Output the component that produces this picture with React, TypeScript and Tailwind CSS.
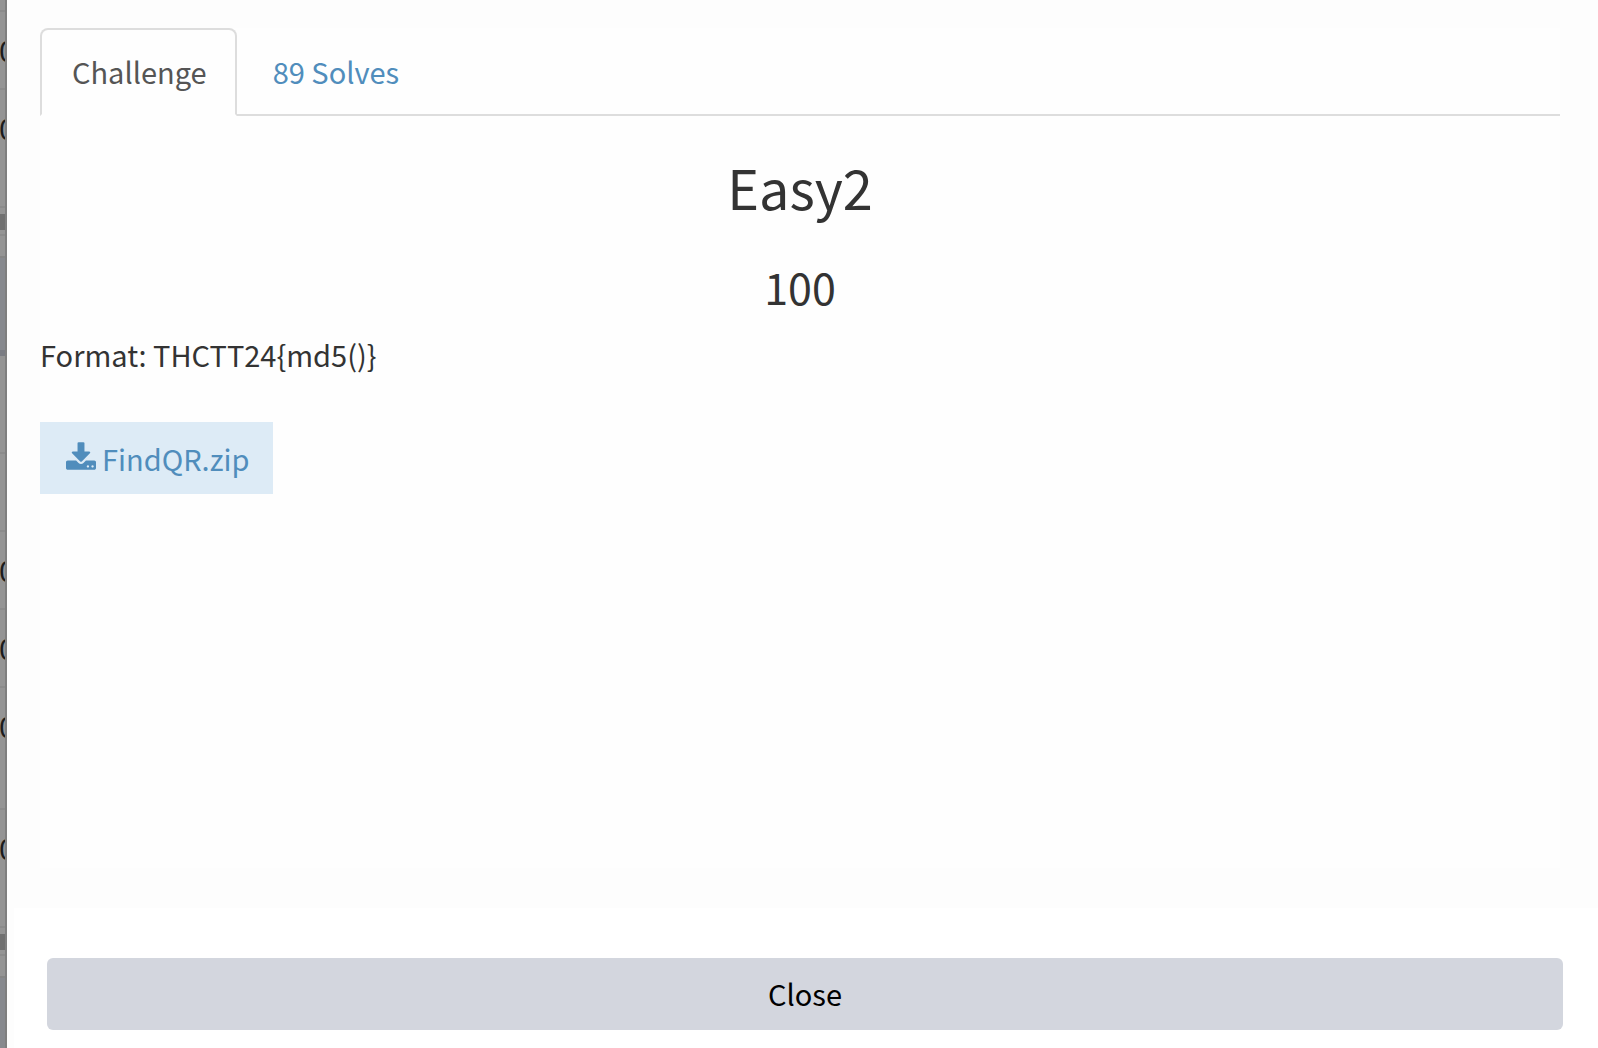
import React, { useState } from "react";

const digit = "shrink-0 pt-[17px] -ml-px text-[29px] leading-10 text-[#1c1c1c]";
const line = "shrink-0 border-b-2 border-[#8b8b8b]";

function Backdrop() {
  return (
    <div
      aria-hidden="true"
      className="flex w-[7px] shrink-0 flex-col overflow-hidden border-r-2 border-[#7f7f7f] bg-[#949494]"
    >
      <div className={"h-3 " + line} />
      <div className={"h-[76px] " + digit}>0</div>
      <div className={"h-[120px] border-y-2 border-[#8b8b8b] " + digit}>0</div>
      <div className="mt-[6px] h-4 shrink-0 bg-[#707070]" />
      <div className="mt-1 h-6 shrink-0 border-t-2 border-b-2 border-t-[#8b8b8b] border-b-[#858585]" />
      <div className="h-[92px] shrink-0 bg-[#87898e]" />
      <div className="h-[6px] shrink-0 bg-[#7a7c83]" />
      <div className={"h-[98px] " + line} />
      <div className={"h-[78px] " + line} />
      <div className={"h-[78px] " + line + " " + digit}>0</div>
      <div className={"h-[78px] " + line + " " + digit}>0</div>
      <div className={"h-[122px] " + line + " " + digit}>0</div>
      <div className={"h-[118px] " + line + " " + digit}>0</div>
      <div className="mt-[6px] h-4 shrink-0 bg-[#707070]" />
      <div className="mt-1 h-6 shrink-0 border-t-2 border-b-2 border-t-[#8b8b8b] border-b-[#858585]" />
      <div className="flex-1 bg-[#87898e]" />
    </div>
  );
}

function DownloadIcon() {
  return (
    <svg viewBox="64 0 1664 1536" className="mb-1 h-7 w-[30px]" fill="currentColor" aria-hidden="true">
      <path d="M1344 1344q0-26-19-45t-45-19-45 19-19 45 19 45 45 19 45-19 19-45zm256 0q0-26-19-45t-45-19-45 19-19 45 19 45 45 19 45-19 19-45zm128-224v320q0 40-28 68t-68 28h-1472q-40 0-68-28t-28-68v-320q0-40 28-68t68-28h465l135 136q58 56 136 56t136-56l136-136h464q40 0 68 28t28 68zm-325-569q17 41-14 70l-448 448q-18 19-45 19t-45-19l-448-448q-31-29-14-70 17-39 59-39h256v-448q0-26 19-45t45-19h256q26 0 45 19t19 45v448h256q42 0 59 39z" />
    </svg>
  );
}

const activeTab =
  "-mb-[2px] h-[88px] rounded-t-lg border-2 border-[#ddd] border-b-transparent bg-[#fefefe] pr-7 pb-[2px] pl-[30px] text-[#555]";
const idleTab =
  "-mb-[2px] h-[88px] rounded-t-lg border-2 border-transparent pr-7 pb-[2px] pl-[30px] text-[#508dbc]";

export default function App() {
  const [tab, setTab] = useState("challenge");
  return (
    <div className="flex min-h-screen font-['Noto_Sans_CJK_SC',sans-serif] text-[29px] leading-10 text-[#333]">
      <Backdrop />
      <main role="dialog" aria-labelledby="title" className="flex min-w-0 flex-1 flex-col bg-[#fdfdfd]">
        <div className="mt-7 mr-[38px] mb-10 ml-[33px] flex flex-1 flex-col bg-[#fefefe]">
          <div role="tablist" className="flex gap-1 border-b-2 border-[#ddd]">
            <button
              role="tab"
              aria-selected={tab === "challenge"}
              onClick={() => setTab("challenge")}
              className={tab === "challenge" ? activeTab : idleTab}
            >
              Challenge
            </button>
            <button
              role="tab"
              aria-selected={tab === "solves"}
              onClick={() => setTab("solves")}
              className={tab === "solves" ? activeTab : idleTab}
            >
              89 Solves
            </button>
          </div>
          <h2 id="title" className="mt-9 text-center text-[54px] leading-[70px]">
            Easy2
          </h2>
          <h3 className="mt-9 text-center text-[43px] leading-[56px]">100</h3>
          <p className="mt-5">Format: THCTT24{"{md5()}"}</p>
          <div className="mt-12 flex">
            <a
              href="#FindQR.zip"
              className="flex h-[72px] items-center gap-[6px] bg-[#ddebf6] pr-6 pb-px pl-[26px] text-[#508dbc]"
            >
              <DownloadIcon />
              FindQR.zip
            </a>
          </div>
        </div>
        <footer className="ml-[7px] bg-white pt-[50px] pr-[35px] pb-[18px] pl-[33px]">
          <button className="h-[72px] w-full rounded-md bg-[#d3d6de] pb-[2px] text-black">Close</button>
        </footer>
      </main>
    </div>
  );
}
